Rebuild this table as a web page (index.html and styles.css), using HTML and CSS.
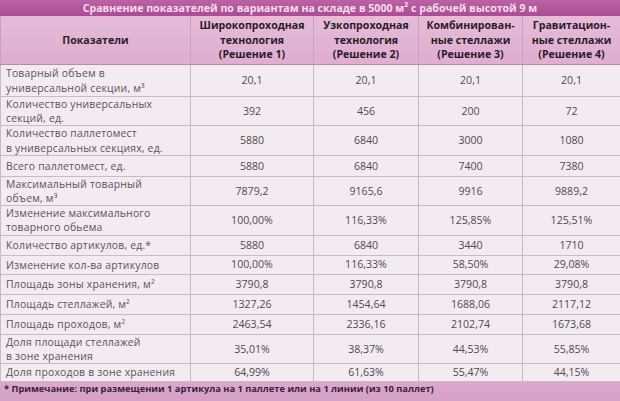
FILE: index.html
```html
<!DOCTYPE html>
<html lang="ru">
<head>
<meta charset="utf-8">
<link rel="stylesheet" href="styles.css">
</head>
<body>
<div class="sheet">
  <div class="title">Сравнение показателей по вариантам на складе в 5000 м² с рабочей высотой 9 м</div>
  <table class="grid">
    <colgroup>
      <col class="c0"><col class="c1"><col class="c2"><col class="c3"><col class="c4">
    </colgroup>
    <thead>
      <tr>
        <th>Показатели</th>
        <th>Широкопроходная<br>технология<br>(Решение 1)</th>
        <th>Узкопроходная<br>технология<br>(Решение 2)</th>
        <th>Комбинирован-<br>ные стеллажи<br>(Решение 3)</th>
        <th>Гравитацион-<br>ные стеллажи<br>(Решение 4)</th>
      </tr>
    </thead>
    <tbody>
      <tr class="r32"><td>Товарный объем в<br>универсальной секции, м³</td><td>20,1</td><td>20,1</td><td>20,1</td><td>20,1</td></tr>
      <tr class="r29"><td>Количество универсальных<br>секций, ед.</td><td>392</td><td>456</td><td>200</td><td>72</td></tr>
      <tr class="r29"><td>Количество паллетомест<br>в универсальных секциях, ед.</td><td>5880</td><td>6840</td><td>3000</td><td>1080</td></tr>
      <tr class="r21"><td>Всего паллетомест, ед.</td><td>5880</td><td>6840</td><td>7400</td><td>7380</td></tr>
      <tr class="r29"><td>Максимальный товарный<br>объем, м³</td><td>7879,2</td><td>9165,6</td><td>9916</td><td>9889,2</td></tr>
      <tr class="r29"><td>Изменение максимального<br>товарного обьема</td><td>100,00%</td><td>116,33%</td><td>125,85%</td><td>125,51%</td></tr>
      <tr class="r20"><td>Количество артикулов, ед.*</td><td>5880</td><td>6840</td><td>3440</td><td>1710</td></tr>
      <tr class="r19"><td>Изменение кол-ва артикулов</td><td>100,00%</td><td>116,33%</td><td>58,50%</td><td>29,08%</td></tr>
      <tr class="r20"><td>Площадь зоны хранения, м²</td><td>3790,8</td><td>3790,8</td><td>3790,8</td><td>3790,8</td></tr>
      <tr class="r20"><td>Площадь стеллажей, м²</td><td>1327,26</td><td>1454,64</td><td>1688,06</td><td>2117,12</td></tr>
      <tr class="r20"><td>Площадь проходов, м²</td><td>2463,54</td><td>2336,16</td><td>2102,74</td><td>1673,68</td></tr>
      <tr class="r29"><td>Доля площади стеллажей<br>в зоне хранения</td><td>35,01%</td><td>38,37%</td><td>44,53%</td><td>55,85%</td></tr>
      <tr class="r18"><td>Доля проходов в зоне хранения</td><td>64,99%</td><td>61,63%</td><td>55,47%</td><td>44,15%</td></tr>
    </tbody>
  </table>
  <div class="note">* Примечание: при размещении 1 артикула на 1 паллете или на 1 линии (из 10 паллет)</div>
</div>
</body>
</html>
```
FILE: styles.css
```css
html, body {
  margin: 0;
  padding: 0;
  background: #f3e8f0;
}
.sheet {
  width: 620px;
  height: 401px;
  overflow: hidden;
  font-family: "Open Sans", "Noto Sans", sans-serif;
}
.title {
  height: 16px;
  line-height: 16px;
  background: linear-gradient(#bb62a4, #a94d92);
  color: #f7dcef;
  font-weight: 700;
  font-size: 10.6px;
  text-align: center;
  white-space: nowrap;
}
.grid {
  width: 620px;
  border-collapse: collapse;
  table-layout: fixed;
}
.c0 { width: 190px; }
.c1 { width: 123px; }
.c2 { width: 105px; }
.c3 { width: 104px; }
.c4 { width: 98px; }
.grid th {
  height: 48px;
  padding: 0;
  background: linear-gradient(#e6bbd9, #deadcf);
  color: #2b1b28;
  font-size: 10.6px;
  line-height: 14.4px;
  font-weight: 700;
  border-left: 1px solid #caa0bd;
  border-right: 1px solid #caa0bd;
  border-bottom: 1px solid #b98aac;
  white-space: nowrap;
}
.grid td {
  padding: 0;
  background: #f4eaf2;
  color: #4e4a4d;
  font-size: 10.6px;
  line-height: 14.4px;
  text-align: center;
  border: 1px solid #c8bcc4;
  white-space: nowrap;
}
.grid td:first-child {
  text-align: left;
  padding-left: 5px;
  font-size: 10.4px;
  line-height: 14.2px;
  letter-spacing: 0.2px;
  color: #595459;
}
.r32 td { height: 31px; }
.r29 td { height: 28px; }
.r21 td { height: 20px; }
.r20 td { height: 19px; }
.r19 td { height: 18px; }
.r18 td { height: 17px; }
.note {
  height: 22px;
  line-height: 14px;
  background: linear-gradient(#dca9cd, #d49ec5);
  color: #3a1f33;
  font-size: 9.3px;
  font-weight: 700;
  padding-left: 4px;
  white-space: nowrap;
}
```
